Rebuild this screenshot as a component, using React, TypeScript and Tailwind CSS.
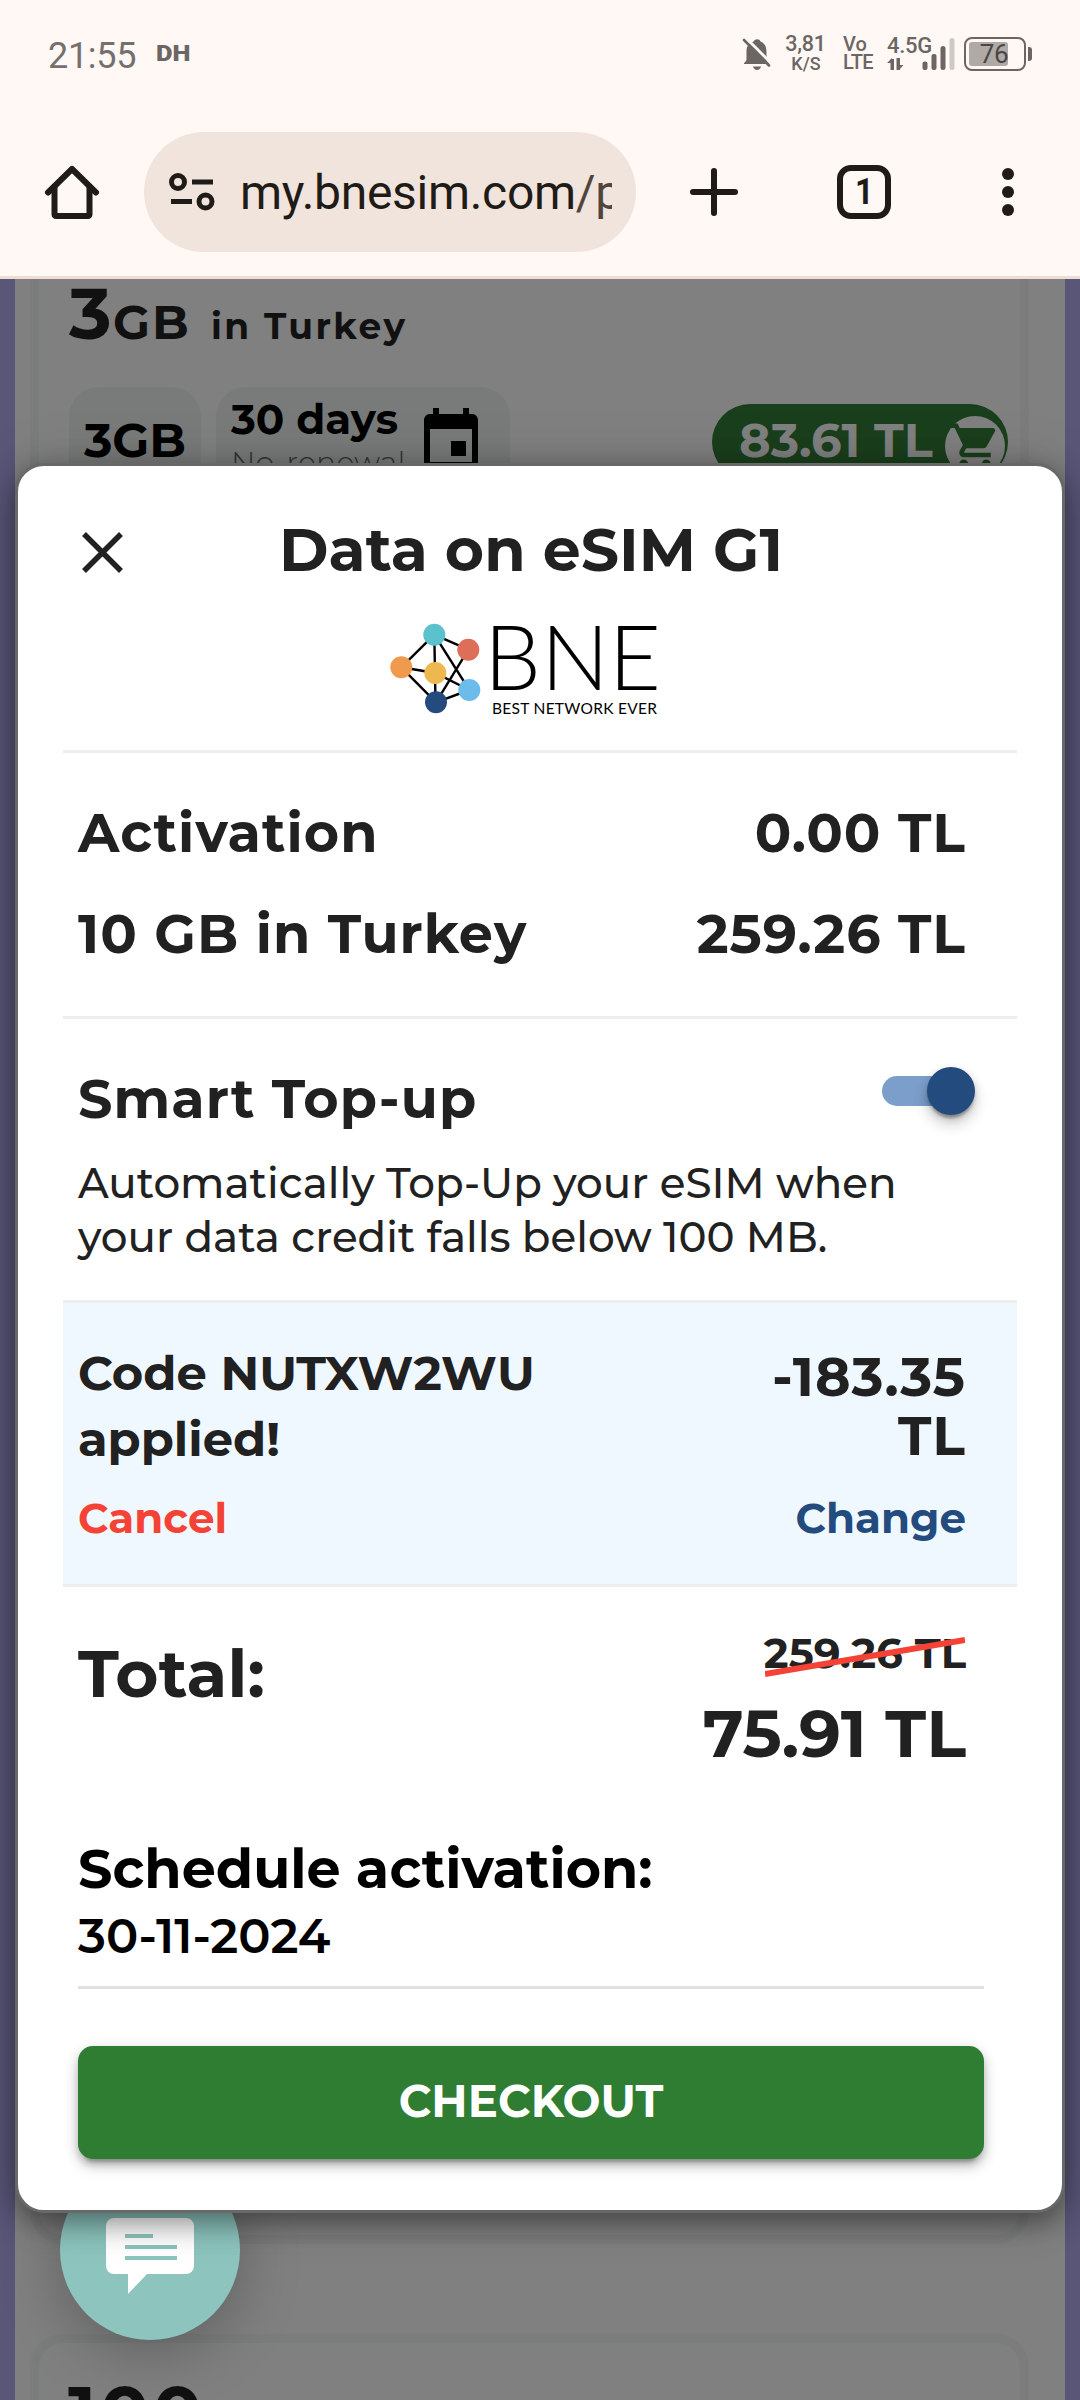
import React from "react";

function StatusBar() {
  return (
    <div className="flex h-[108px] items-start text-[#6b6664] font-['Roboto',sans-serif]">
      <div className="ml-[48px] mt-[38px] w-[91px] text-[36px] leading-[36px] tracking-[-0.3px] text-[#75706d]">21:55</div>
      <div className="ml-[17px] mt-[43px] flex-1 text-[22px] font-black leading-[22px]">
        <span className="inline-block origin-left scale-x-[1.16]">DH</span>
      </div>
      <svg className="mt-[38px] h-[34px] w-[30px]" viewBox="0 0 30 34" fill="none">
        <path d="M11.500 3.500c1.500-3 6-3 7 0 5 2 6 6 6 11v8l3 3.500H2c0-2 2.500-2 2.500-5V13c0-5 3-8 7-9.500z" fill="#6b6664" />
        <path d="M11 28.500h8c-1 4.500-7 4.500-8 0z" fill="#6b6664" />
        <path d="M4 0l27 27" stroke="#fff8f5" strokeWidth="3" />
        <path d="M2 2l25 25.500" stroke="#6b6664" strokeWidth="2.600" strokeLinecap="round" />
      </svg>
      <div className="ml-[15px] mt-[34px] flex w-[38px] flex-col items-center text-[21.5px] font-medium leading-[20px]">
        <span className="-ml-px tracking-[-0.3px]">3,81</span>
        <span className="text-[18px]">K/S</span>
      </div>
      <div className="ml-[18px] mt-[35px] flex w-[32px] flex-col text-[20px] font-medium leading-[18px]">
        <span>Vo</span>
        <span className="tracking-[-0.6px]">LTE</span>
      </div>
      <div className="ml-[12px] mt-[34px] flex w-[70px] flex-col items-start text-[22px] font-medium leading-[23px]">
        <span className="tracking-[-0.3px]">4.5G</span>
        <svg className="-mt-[19px] h-[34px] w-[70px]" viewBox="0 0 70 34" fill="#6b6664">
          <path d="M3.500 32V21H7v11zM0 25l5-5v5zM9.500 20H13v12H9.500zM12 32v-5h4.500z" />
          <rect x="35.500" y="23.500" width="5" height="8.500" rx="2" />
          <rect x="44.500" y="16" width="5" height="16" rx="2" />
          <rect x="53.500" y="8" width="5" height="24" rx="2.500" />
          <rect x="62.500" y="0" width="5" height="32" rx="2.500" fill="#cfc9c6" />
        </svg>
      </div>
      <div className="ml-[7px] mr-[48px] mt-[37px] flex items-center">
        <div className="flex h-[34px] w-[62px] rounded-[8px] border-[2.5px] border-[#6b6664] p-[3px]">
          <div className="flex h-full w-[39px] items-center justify-end rounded-[3px] bg-[#b0aaa7] text-[26px] leading-[24px] text-[#4a4644]">
            <span className="tracking-[-0.5px]">76</span>
          </div>
        </div>
        <div className="ml-[2px] h-[14px] w-[4px] rounded-r-[3px] bg-[#6b6664]" />
      </div>
    </div>
  );
}

function BrowserBar() {
  return (
    <div className="flex h-[171px] items-start border-b-[3px] border-[#f0ddd2] pt-[24px]">
      <div className="flex h-[120px] w-full items-center">
        <svg className="ml-[44px] h-[58px] w-[56px]" viewBox="0 0 56 58" fill="none" stroke="#1f1b16" strokeWidth="6" strokeLinecap="round" strokeLinejoin="round">
          <path d="M4 29.500L28 6l24 23.500" />
          <path d="M10.500 24v27.500a1.500 1.500 0 0 0 1.500 1.500h32a1.500 1.500 0 0 0 1.500-1.500V24" />
        </svg>
        <div className="ml-[44px] flex h-[120px] w-[492px] items-center rounded-full bg-[#f0e4dc]">
          <svg className="ml-[25px] h-[40px] w-[47px]" viewBox="0 0 47 40" fill="none" stroke="#1f1b16" strokeWidth="5">
            <circle cx="9" cy="10" r="6.500" />
            <path d="M23 10h21M2 29.500h21" />
            <circle cx="36.500" cy="29.500" r="6.500" />
          </svg>
          <div className="ml-[24px] w-[372px] overflow-hidden whitespace-nowrap pt-[2px] font-['Roboto',sans-serif] text-[48px] leading-[60px] tracking-[-0.3px] text-[#1f1b16]">
            my.bnesim.com<span className="text-[#51443b]">/p</span>
          </div>
        </div>
        <svg className="ml-[53px] h-[50px] w-[50px]" viewBox="0 0 50 50" stroke="#1f1b16" strokeWidth="6" strokeLinecap="round">
          <path d="M25 4v42M4 25h42" />
        </svg>
        <div className="ml-[98px] flex h-[54px] w-[54px] items-center justify-center rounded-[14px] border-[6px] border-[#1f1b16] font-['Roboto',sans-serif] text-[36px] font-bold leading-none text-[#1f1b16]">
          <span className="scale-x-[0.9]">1</span>
        </div>
        <svg className="ml-[109px] h-[50px] w-[16px]" viewBox="0 0 16 50" fill="#1f1b16">
          <circle cx="8" cy="7" r="6" />
          <circle cx="8" cy="25" r="6" />
          <circle cx="8" cy="43" r="6" />
        </svg>
      </div>
    </div>
  );
}

function PlansPage() {
  return (
    <div className="flex h-[2121px] justify-center bg-[#595678]">
      <div className="flex w-[1050px] flex-col bg-[#808080] pl-[15px] pr-[36px]">
        <div className="h-[1965px] rounded-b-[33px] border-x-[9px] border-b-[9px] border-[#7a7d7c] pl-[29px]">
          <div className="flex h-[60px] items-baseline whitespace-nowrap pt-[4px] font-bold leading-[60px] text-[#111]">
            <span className="w-[45px] pl-px text-[72px]">3</span>
            <span className="w-[98px] text-[48px] tracking-[2px]">GB</span>
            <span className="text-[36px] tracking-[2.400px]">in Turkey</span>
          </div>
          <div className="mt-[48px] flex items-start text-black">
            <div className="ml-px flex h-[108px] w-[132px] items-start justify-center rounded-[30px] bg-[#787b7a] pt-[23px] text-[48px] font-bold leading-[60px]">
              3GB
            </div>
            <div className="ml-[15px] flex h-[108px] w-[294px] rounded-[30px] bg-[#787b7a] pl-[15px]">
              <div className="w-[184px] whitespace-nowrap pt-[6px]">
                <div className="text-[42px] font-bold leading-[52px]">30 days</div>
                <div className="text-[30px] font-light leading-[36px] tracking-[0.200px] text-[#333]">No-renewal</div>
              </div>
              <svg className="mt-[18px] h-[72px] w-[72px]" viewBox="0 0 24 24" fill="#000">
                <path d="M17 12h-5v5h5v-5zM16 1v2H8V1H6v2H5c-1.110 0-1.990.9-1.990 2L3 19c0 1.100.89 2 2 2h14c1.100 0 2-.9 2-2V5c0-1.100-.9-2-2-2h-1V1h-2zm3 18H5V8h14v11z" />
              </svg>
            </div>
            <div className="ml-[202px] mt-[17px] flex h-[76px] w-[296px] items-start rounded-full bg-[#1a3f1c] pl-[27px] text-[48px] font-bold text-[#808080]">
              <span className="mt-[6px] w-[206px] whitespace-nowrap leading-[60px]">83.61 TL</span>
              <div className="mt-[12px] flex h-[60px] w-[60px] shrink-0 items-center justify-center rounded-full bg-[#808080]">
                <svg className="h-[54px] w-[54px]" viewBox="0 0 24 24" fill="#1a3f1c">
                  <path d="M7 18c-1.100 0-1.990.9-1.990 2S5.900 22 7 22s2-.9 2-2-.9-2-2-2zM1 2v2h2l3.600 7.590-1.350 2.450c-.16.28-.25.61-.25.96 0 1.100.9 2 2 2h12v-2H7.420c-.14 0-.25-.11-.25-.25l.03-.12.9-1.630h7.450c.75 0 1.410-.41 1.750-1.030l3.580-6.490c.08-.14.12-.31.12-.48 0-.55-.45-1-1-1H5.210l-.94-2H1zm16 16c-1.100 0-1.990.9-1.990 2s.89 2 1.990 2 2-.9 2-2-.9-2-2-2z" />
                </svg>
              </div>
            </div>
          </div>
        </div>
        <div className="mt-[90px] h-[66px] overflow-hidden rounded-t-[33px] border-x-[9px] border-t-[9px] border-[#7a7d7c] pl-[29px] pt-[38px]">
          <div className="text-[72px] font-bold leading-[60px] tracking-[4px] text-[#111]">100</div>
        </div>
      </div>
    </div>
  );
}

function ChatButton() {
  return (
    <div className="absolute left-[60px] top-[2160px] h-[180px] w-[180px] rounded-full bg-[#8dc5be] shadow-[0_12px_60px_rgba(0,0,0,0.25)]">
      <svg className="h-[180px] w-[180px]" viewBox="0 0 180 180">
        <path d="M54 58h72a8 8 0 0 1 8 8v40a8 8 0 0 1-8 8H87l-19 20v-20H54a8 8 0 0 1-8-8V66a8 8 0 0 1 8-8z" fill="#fff" />
        <path d="M65 76h28M65 87h52M65 98h52" stroke="#8dc5be" strokeWidth="4" />
      </svg>
    </div>
  );
}

function BneLogo() {
  return (
    <svg className="ml-[367px] mt-[34px] h-[100px] w-[290px]" viewBox="385 620 290 100">
      <g stroke="#000" strokeWidth="2.400" fill="none">
        <path d="M434.300 634.700L468.300 649.700M434.300 634.700L401.300 667.300M434.300 634.700L435.500 702M434.300 634.700L469.300 690M468.300 649.700L436 702.300M401.300 667.300L435.300 673L469.300 690M401.300 667.300L436 702.300L469.300 690" />
      </g>
      <circle cx="434.300" cy="634.700" r="11" fill="#5bc2cd" />
      <circle cx="468.300" cy="649.700" r="11" fill="#dd6e57" />
      <circle cx="401.300" cy="667.300" r="11" fill="#f09a4e" />
      <circle cx="435.300" cy="673" r="11" fill="#edb84d" />
      <circle cx="469.300" cy="690" r="11" fill="#6bbcea" />
      <circle cx="436" cy="702.300" r="11" fill="#234b7d" />
      <text x="484" y="690" className="font-['Lato',sans-serif] text-[90px] font-light">BNE</text>
      <text x="492" y="714" textLength="165" className="font-['Lato',sans-serif] text-[15.500px]">BEST NETWORK EVER</text>
    </svg>
  );
}

function ChargeRow({ label, amount }: { label: string; amount: string }) {
  return (
    <div className="flex h-[66px] justify-between whitespace-nowrap text-[54px] font-bold leading-[66px] tracking-[1.050px]">
      <span>{label}</span>
      <span>{amount}</span>
    </div>
  );
}

function CheckoutDialog() {
  return (
    <div className="absolute left-[15px] top-[463px] flex h-[1750px] w-[1050px] flex-col rounded-[29px] border-[3px] border-[#686868] bg-white text-[#212121] shadow-[0_9px_30px_rgba(0,0,0,0.45),0_0_60px_rgba(0,0,0,0.1)]">
      <div className="h-[284px] pt-[48px]">
        <div className="flex h-[72px] items-center">
          <svg className="ml-[63px] mt-[5px] h-[43px] w-[43px]" viewBox="0 0 43 43" stroke="#212121" strokeWidth="5.500">
            <path d="M3 3l37 37M40 3L3 40" />
          </svg>
          <h1 className="ml-[155px] whitespace-nowrap text-[60px] font-bold leading-[72px] tracking-[0.050px]">Data on eSIM G1</h1>
        </div>
        <BneLogo />
      </div>

      <div className="mx-[45px] flex h-[269px] flex-col gap-[35px] border-y-[3px] border-[#eee] pl-[15px] pr-[51px] pt-[47px]">
        <ChargeRow label="Activation" amount="0.00 TL" />
        <ChargeRow label="10 GB in Turkey" amount="259.26 TL" />
      </div>

      <div className="mx-[45px] h-[281px] pl-[15px] pr-[42px] pt-[47px]">
        <div className="flex items-start justify-between">
          <h2 className="text-[54px] font-bold leading-[66px] tracking-[1.100px]">Smart Top-up</h2>
          <div className="mt-px flex h-[48px] w-[93px] items-center rounded-full">
            <div className="h-[30px] w-[78px] rounded-full bg-[#7b9ecb]" />
            <div className="-ml-[33px] h-[48px] w-[48px] shrink-0 rounded-full bg-[#234b7d] shadow-[0_6px_3px_-3px_rgba(0,0,0,0.2),0_3px_3px_rgba(0,0,0,0.14),0_3px_9px_rgba(0,0,0,0.12),0_9px_15px_rgba(0,0,0,0.2)]" />
          </div>
        </div>
        <p className="mt-[24px] whitespace-nowrap text-[42px] font-medium leading-[54px]">
          Automatically Top-Up your eSIM when
          <br />
          your data credit falls below 100 MB.
        </p>
      </div>

      <div className="mx-[45px] h-[287px] border-y-[3px] border-[#eee] bg-[#f0f8ff] pl-[15px] pr-[51px] pt-[37px] font-bold">
        <div className="flex h-[132px] justify-between">
          <div className="w-[520px] text-[48px] leading-[66px]">Code NUTXW2WU applied!</div>
          <div className="mt-[8px] w-[220px] text-right text-[54px] leading-[59px] tracking-[1.050px]">-183.35 TL</div>
        </div>
        <div className="mt-[19px] flex justify-between text-[42px] leading-[54px]">
          <span className="text-[#f44336]">Cancel</span>
          <span className="text-[#234b7d]">Change</span>
        </div>
      </div>

      <div className="flex h-[249px] items-start justify-between pl-[60px] pr-[96px] font-bold">
        <div className="mt-[47px] text-[66px] leading-[80px] tracking-[0.200px]">Total:</div>
        <div className="mt-[41px] flex flex-col items-end whitespace-nowrap">
          <div className="relative text-[42px] font-bold leading-[50px]">
            259.26 TL
            <svg className="absolute right-px top-[9px] h-[43px] w-[200px]" viewBox="0 0 200 43" stroke="#f44336" strokeWidth="6">
              <path d="M0 37L200 3" />
            </svg>
          </div>
          <div className="mt-[16px] text-[66px] leading-[80px]">75.91 TL</div>
        </div>
      </div>

      <div className="ml-[60px] mr-[78px] h-[153px] border-b-[3px] border-[#e0e0e0] text-black">
        <div className="whitespace-nowrap text-[54px] font-bold leading-[66px]">Schedule activation:</div>
        <div className="mt-[4px] text-[48px] font-semibold leading-[60px]">30-11-2024</div>
      </div>

      <button className="ml-[60px] mt-[57px] flex h-[113px] w-[906px] items-center justify-center rounded-[15px] bg-[#2e7d32] pb-[3px] text-[45px] font-bold leading-[60px] tracking-[0.100px] text-white shadow-[0_9px_3px_-6px_rgba(0,0,0,0.2),0_6px_6px_rgba(0,0,0,0.14),0_3px_15px_rgba(0,0,0,0.12),0_9px_15px_rgba(0,0,0,0.12)]">
        CHECKOUT
      </button>
    </div>
  );
}

export default function App() {
  return (
    <div className="relative h-[2400px] w-[1080px] overflow-hidden bg-[#fff8f5] font-['Montserrat','Inter',sans-serif]">
      <StatusBar />
      <BrowserBar />
      <PlansPage />
      <ChatButton />
      <CheckoutDialog />
    </div>
  );
}
